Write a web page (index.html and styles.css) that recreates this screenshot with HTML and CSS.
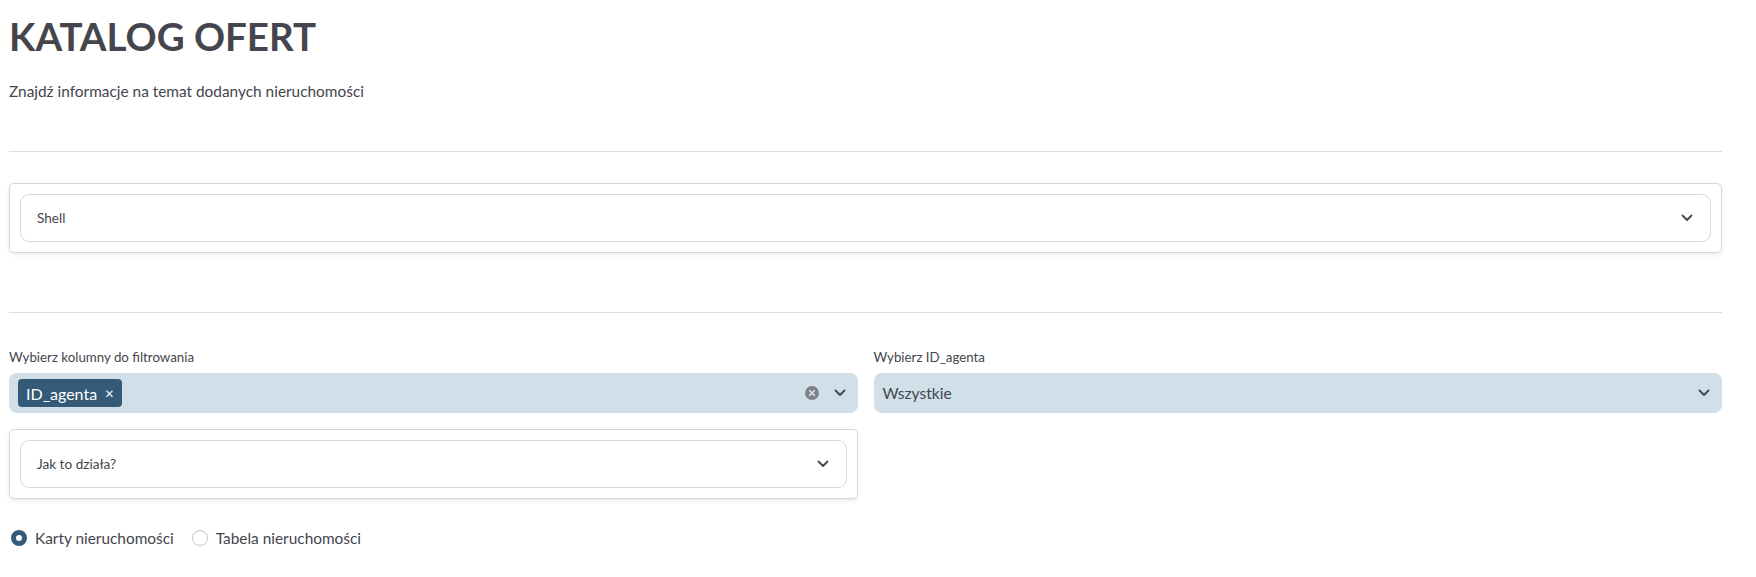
FILE: index.html
```html
<!DOCTYPE html>
<html lang="pl">
<head>
<meta charset="utf-8">
<title>Katalog ofert</title>
<link rel="stylesheet" href="styles.css">
</head>
<body>
<main class="page">
  <h1 class="title">KATALOG OFERT</h1>
  <p class="subtitle">Znajdź informacje na temat dodanych nieruchomości</p>
  <hr class="divider divider-top">
  <section class="card">
    <div class="expander">
      <span class="expander-label">Shell</span>
      <svg class="chev" viewBox="0 0 12 8" width="12" height="8"><path d="M1.5 1.5 L6 6 L10.5 1.5" fill="none" stroke="#45454d" stroke-width="1.8" stroke-linecap="round" stroke-linejoin="round"/></svg>
    </div>
  </section>
  <hr class="divider divider-mid">
  <div class="filters">
    <div class="col">
      <label class="field-label">Wybierz kolumny do filtrowania</label>
      <div class="select">
        <span class="tag">ID_agenta <span class="tag-x">×</span></span>
        <span class="select-icons">
          <svg class="clear" viewBox="0 0 16 16" width="16" height="16"><circle cx="8" cy="8" r="7" fill="#7f7f87"/><path d="M5.6 5.6 L10.4 10.4 M10.4 5.6 L5.6 10.4" stroke="#d0dee8" stroke-width="1.6" stroke-linecap="round"/></svg>
          <svg class="chev" viewBox="0 0 12 8" width="12" height="8"><path d="M1.5 1.5 L6 6 L10.5 1.5" fill="none" stroke="#45454d" stroke-width="1.9" stroke-linecap="round" stroke-linejoin="round"/></svg>
        </span>
      </div>
      <section class="card card-small">
        <div class="expander">
          <span class="expander-label">Jak to działa?</span>
          <svg class="chev" viewBox="0 0 12 8" width="12" height="8"><path d="M1.5 1.5 L6 6 L10.5 1.5" fill="none" stroke="#45454d" stroke-width="1.8" stroke-linecap="round" stroke-linejoin="round"/></svg>
        </div>
      </section>
    </div>
    <div class="col">
      <label class="field-label">Wybierz ID_agenta</label>
      <div class="select">
        <span class="select-value">Wszystkie</span>
        <span class="select-icons">
          <svg class="chev" viewBox="0 0 12 8" width="12" height="8"><path d="M1.5 1.5 L6 6 L10.5 1.5" fill="none" stroke="#45454d" stroke-width="1.9" stroke-linecap="round" stroke-linejoin="round"/></svg>
        </span>
      </div>
    </div>
  </div>
  <div class="radios">
    <label class="radio"><span class="dot dot-on"></span>Karty nieruchomości</label>
    <label class="radio"><span class="dot"></span>Tabela nieruchomości</label>
  </div>
</main>
</body>
</html>
```

FILE: styles.css
```css
* { box-sizing: border-box; }
html, body { margin: 0; padding: 0; background: #fff; }
body {
  font-family: "Source Sans Pro", Lato, "Noto Sans", sans-serif;
  color: #45454d;
}
.page {
  width: 1722px;
  padding: 0 0 0 9px;
}
.title {
  margin: 0;
  padding-top: 11px;
  font-size: 38.5px;
  line-height: 50px;
  font-weight: 700;
  color: #45454d;
  letter-spacing: 0;
}
.subtitle {
  margin: 0;
  padding-top: 19px;
  font-size: 15.4px;
  line-height: 22px;
}
.divider {
  border: 0;
  border-top: 1px solid #dcdcdc;
  margin: 0;
}
.divider-top { margin-top: 49px; }
.divider-mid { margin-top: 59px; }
.card {
  margin-top: 31px;
  border: 1px solid #d6d6d6;
  border-radius: 5px;
  padding: 10px;
  box-shadow: 0 2px 4px rgba(0,0,0,0.08);
}
.expander {
  height: 48px;
  border: 1px solid #d9d9d9;
  border-radius: 9px;
  display: flex;
  align-items: center;
  justify-content: space-between;
  padding: 0 17px 0 16px;
}
.expander-label { font-size: 13.6px; color: #45454d; }
.filters {
  margin-top: 34px;
  display: flex;
  gap: 16px;
}
.col { flex: 1; min-width: 0; }
.field-label {
  display: block;
  font-size: 13.3px;
  line-height: 20px;
  height: 26px;
  color: #45454d;
}
.select {
  height: 40px;
  background: #d0dfe8;
  border-radius: 8px;
  display: flex;
  align-items: center;
  justify-content: space-between;
  padding: 0 12px 0 9px;
}
.tag {
  background: #345a78;
  color: #fff;
  border-radius: 4px;
  height: 28px;
  display: inline-flex;
  align-items: center;
  padding: 0 8px 0 8px;
  font-size: 16px;
  gap: 8px;
}
.tag-x { font-size: 15px; }
.select-value { font-size: 15.6px; color: #45454d; }
.select-icons { display: flex; align-items: center; gap: 14px; }
.card-small { margin-top: 16px; }
.radios {
  margin-top: 28px;
  display: flex;
  gap: 16px;
  font-size: 15.4px;
}
.radio {
  display: flex;
  align-items: center;
  gap: 8px;
  line-height: 22px;
}
.dot {
  width: 16px;
  height: 16px;
  border-radius: 50%;
  border: 1px solid #c8c8cc;
  background: #fff;
  display: inline-block;
  margin-left: 2px;
}
.dot-on {
  border: 5px solid #345a78;
  background: #fff;
}
```
